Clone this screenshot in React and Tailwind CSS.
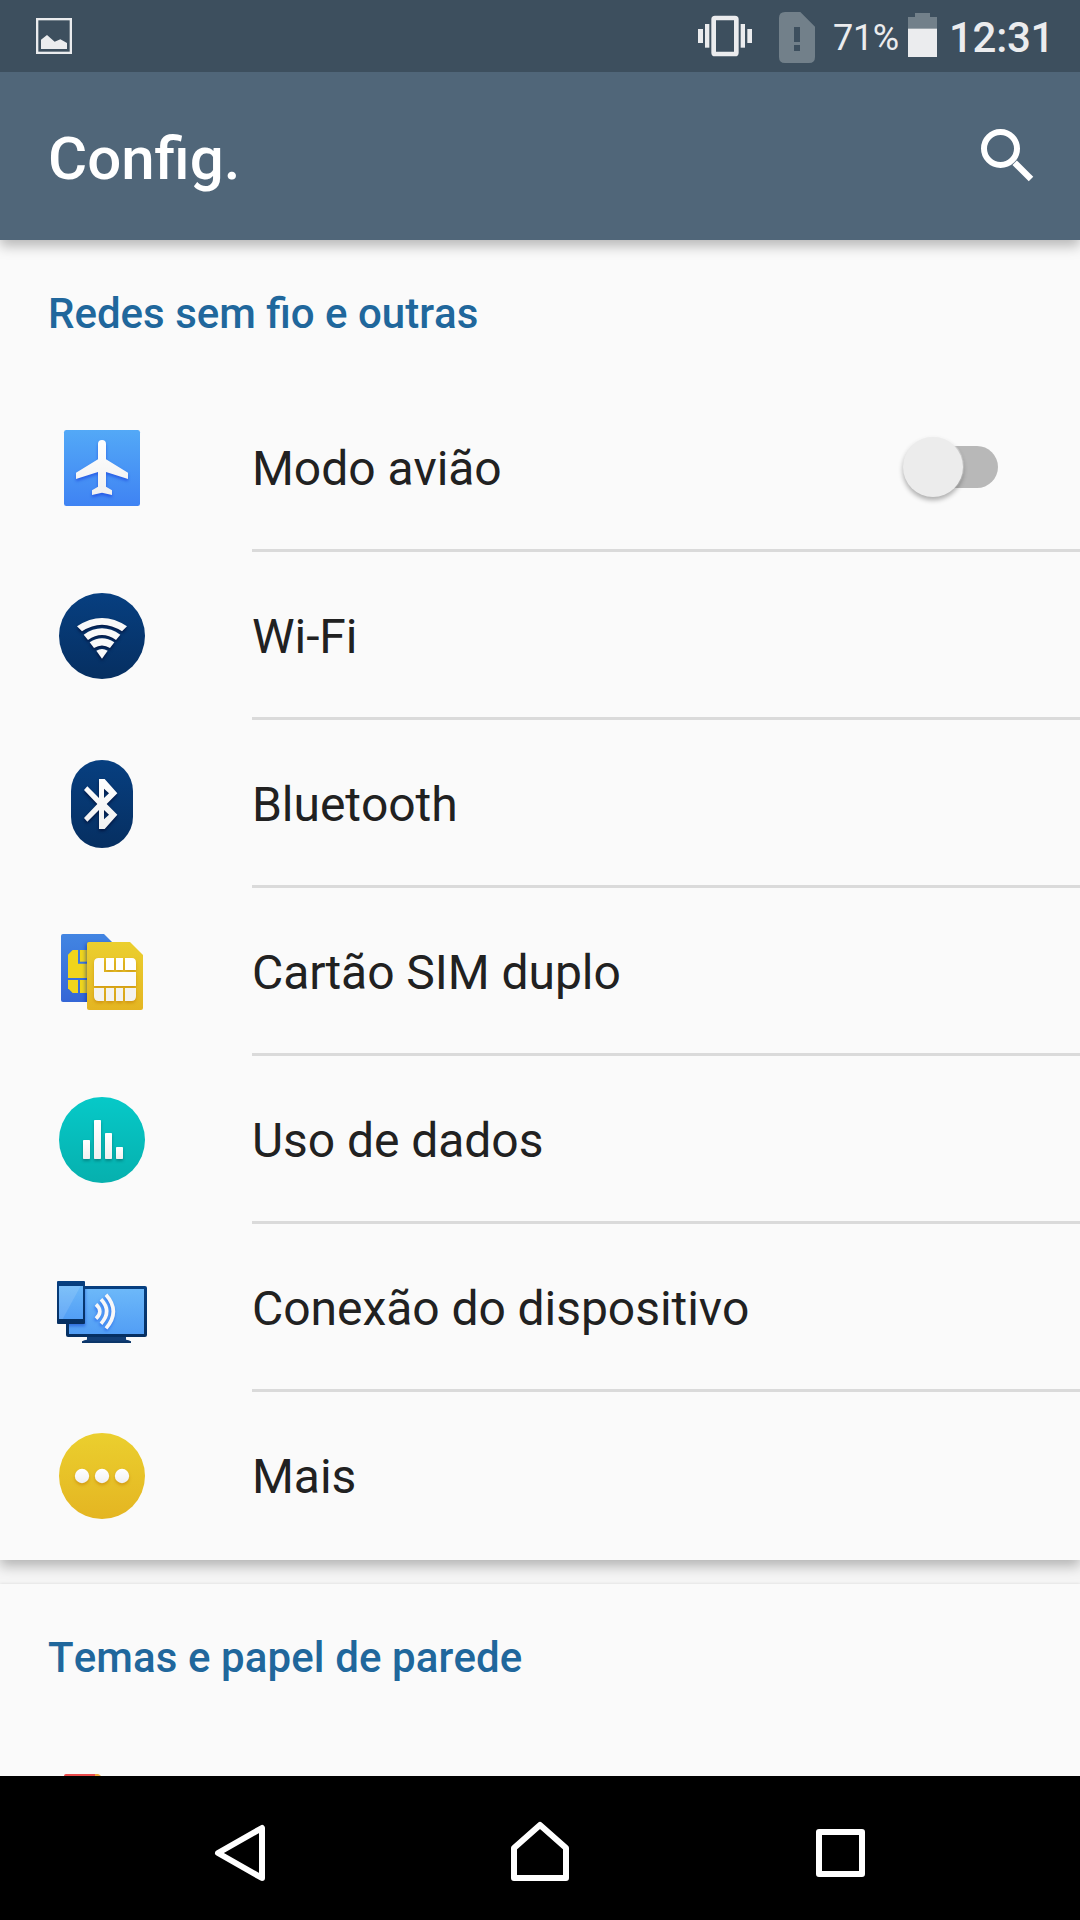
import React from "react";

function Gradients() {
  const list = [
    ["sky", "#53a9f7", "#3f83f3"],
    ["navy", "#073f80", "#062f61"],
    ["gold", "#ebcf2e", "#e4b522"],
    ["blue", "#4285e2", "#3466d6"],
    ["teal", "#06c9c8", "#06b0ae"],
    ["screen", "#6cb8f9", "#529ef5"],
    ["white", "#ffffff", "#f0f0f0"],
  ];
  return (
    <svg className="absolute h-0 w-0">
      <defs>
        {list.map(([id, a, b]) => (
          <linearGradient key={id} id={id} x1="0" y1="0" x2="0" y2="1">
            <stop offset="0" stopColor={a} />
            <stop offset="1" stopColor={b} />
          </linearGradient>
        ))}
        <clipPath id="backCard">
          <path d="M63 582H192L216 606V786H63Z" />
        </clipPath>
        <clipPath id="tvScreen">
          <rect x="87" y="627" width="225" height="135" />
        </clipPath>
      </defs>
    </svg>
  );
}

function Glyph({ box, children }) {
  return (
    <svg className="h-24 w-24 shrink-0" viewBox={box}>
      {children}
    </svg>
  );
}

const Airplane = () => (
  <Glyph box="42 30 288 288">
    <rect x="72" y="60" width="228" height="228" rx="7" fill="url(#sky)" />
    <path
      className="drop-shadow-[0_7px_5px_rgba(20,60,220,0.6)]"
      fill="url(#white)"
      d="M174 102a12 12 0 0 1 24 0V148L264 188V207L198 186V230L216 241V255L186 248L156 255V241L174 230V186L108 207V188L174 148Z"
    />
  </Glyph>
);

const Wifi = () => (
  <Glyph box="42 534 288 288">
    <circle cx="186" cy="678" r="129" fill="url(#navy)" />
    <g className="drop-shadow-[0_6px_4px_rgba(0,10,50,0.7)]" fill="#f9f9f9">
      <path d="M111 649Q186 599 261 649L246 664Q186 624 126 664Z" />
      <path d="M131 674Q186 636 241 674L228 690Q186 660 144 690Z" />
      <path d="M149 697Q186 673 223 697L210 714Q186 699 162 714Z" />
      <path d="M169 722Q186 712 203 722L186 746Z" />
    </g>
  </Glyph>
);

const Bluetooth = () => (
  <Glyph box="42 48 288 288">
    <rect x="93" y="60" width="186" height="264" rx="93" fill="url(#navy)" />
    <path
      className="drop-shadow-[0_6px_4px_rgba(0,10,50,0.7)]"
      fill="url(#white)"
      fillRule="evenodd"
      d="M177 117H194L232 160L200 192L232 224L194 267H177V210L142 245L132 234L172 192L132 150L142 139L177 174ZM192 146V174L207 160ZM192 210V238L207 224Z"
    />
  </Glyph>
);

const SimCards = () => (
  <Glyph box="42 552 288 288">
    <path d="M69 582H192L231 621V786H69Q63 786 63 780V588Q63 582 69 582Z" fill="url(#blue)" />
    <g fill="#f0d51b">
      <path d="M98 630H114V671H150V714H84V644Z" />
      <rect x="120" y="630" width="30" height="35" />
      <path d="M84 720H114V759H98L84 745Z" />
      <rect x="120" y="720" width="30" height="39" />
    </g>
    <g clipPath="url(#backCard)">
      <rect className="blur-[6px]" x="138" y="612" width="168" height="204" fill="#0a2896" opacity="0.6" />
    </g>
    <path
      d="M147 606H270L309 645V804Q309 810 303 810H147Q141 810 141 804V612Q141 606 147 606Z"
      fill="url(#gold)"
    />
    <g className="drop-shadow-[0_6px_4px_rgba(190,120,0,0.5)]">
      <path d="M176 654H192V696H288V738H162V668Q162 654 176 654Z" fill="#fbfbfb" />
      <path d="M198 654H222V690H198ZM228 654H249V690H228ZM255 654H276Q288 654 288 668V690H255Z" fill="#fff" />
      <path d="M162 744H192V783H176Q162 783 162 769ZM198 744H222V783H198ZM228 744H249V783H228ZM255 744H288V769Q288 783 274 783H255Z" fill="#f4f3ef" />
    </g>
  </Glyph>
);

const DataUsage = () => (
  <Glyph box="42 36 288 288">
    <circle cx="186" cy="180" r="129" fill="url(#teal)" />
    <g className="drop-shadow-[0_6px_4px_rgba(0,90,90,0.5)]" fill="url(#white)">
      <rect x="129" y="180" width="21" height="57" rx="2" />
      <rect x="162" y="120" width="21" height="117" rx="2" />
      <rect x="195" y="159" width="21" height="78" rx="2" />
      <rect x="228" y="201" width="21" height="36" rx="2" />
    </g>
  </Glyph>
);

const Devices = () => (
  <Glyph box="42 540 288 288">
    <path d="M141 768H258V779L273 784V789H126V784L141 779Z" fill="#0a3568" />
    <path d="M141 771H258V779L273 784H126L141 779Z" fill="#123e75" />
    <rect x="78" y="618" width="243" height="153" rx="6" fill="url(#navy)" />
    <rect x="87" y="627" width="225" height="135" fill="url(#screen)" />
    <g clipPath="url(#tvScreen)">
      <rect className="blur-[5px]" x="54" y="609" width="82" height="130" fill="#1446c8" opacity="0.55" />
    </g>
    <rect x="51" y="603" width="84" height="129" rx="3" fill="url(#navy)" />
    <rect x="57" y="618" width="72" height="99" fill="url(#screen)" />
    <path d="M57 618H122L68 717H57Z" fill="#fff" opacity="0.12" />
    <g
      className="drop-shadow-[-2px_6px_4px_rgba(20,80,230,0.6)]"
      fill="none" stroke="#f8f8f8" strokeWidth="11"
    >
      <path d="M168 673Q191 694 168 716" />
      <path d="M183 658Q217 694 183 731" />
      <path d="M198 644Q242 694 198 745" />
    </g>
  </Glyph>
);

const More = () => (
  <Glyph box="42 54 288 288">
    <circle cx="186" cy="198" r="129" fill="url(#gold)" />
    <g className="drop-shadow-[0_6px_4px_rgba(190,120,0,0.5)]" fill="url(#white)">
      <circle cx="126" cy="198" r="21.5" />
      <circle cx="186" cy="198" r="21.5" />
      <circle cx="246" cy="198" r="21.5" />
    </g>
  </Glyph>
);

const items = [
  { label: "Modo avião", Icon: Airplane, toggle: true },
  { label: "Wi-Fi", Icon: Wifi },
  { label: "Bluetooth", Icon: Bluetooth },
  { label: "Cartão SIM duplo", Icon: SimCards },
  { label: "Uso de dados", Icon: DataUsage },
  { label: "Conexão do dispositivo", Icon: Devices },
  { label: "Mais", Icon: More },
];

function Toggle() {
  return (
    <div className="relative mr-[82px] h-[42px] w-[84px] rounded-full bg-[#b8b8b8]">
      <div className="absolute -left-[11px] -top-[9px] h-[60px] w-[60px] rounded-full bg-[#ececec] shadow-[0_3px_5px_rgba(0,0,0,0.32),0_0_1px_1px_rgba(255,255,255,0.5)]" />
    </div>
  );
}

function StatusBar() {
  return (
    <div className="flex h-[72px] items-start bg-[#3d4f5e] text-[#ebecee]">
      <svg className="ml-9 mt-[18px] h-9 w-9" viewBox="108 54 108 108">
        <rect x="111.500" y="57.500" width="101" height="101" fill="none" stroke="currentColor" strokeWidth="7" />
        <path d="M123 147V119L141 105L164 125L181 118L201 129V147Z" fill="currentColor" />
      </svg>
      <svg className="ml-[626px] mt-[15px] h-[42px] w-[54px]" viewBox="54 45 162 126" fill="currentColor">
        <rect x="54" y="87" width="15" height="42" />
        <rect x="75" y="72" width="13" height="71" />
        <rect x="182" y="72" width="13" height="71" />
        <rect x="202" y="87" width="14" height="42" />
        <rect x="101" y="54" width="68" height="108" rx="4" fill="none" stroke="currentColor" strokeWidth="14" />
      </svg>
      <svg className="ml-[27px] mt-3 h-[51px] w-9" viewBox="297 36 108 153">
        <path
          fill="#72808a"
          fillRule="evenodd"
          d="M315 36H361L405 80V171Q405 189 387 189H315Q297 189 297 171V54Q297 36 315 36ZM342 81V126H360V81ZM342 135V153H360V135Z"
        />
      </svg>
      <span className="ml-[18px] mt-[17px] w-[66px] whitespace-nowrap text-[36px] leading-[42px] tracking-[-0.3px]">71%</span>
      <svg className="ml-[9px] mt-[13px] h-11 w-[29px]" viewBox="684 39 87 132">
        <path d="M705 39H750V51H771V87H684V51H705Z" fill="#72808a" />
        <rect x="684" y="86" width="87" height="85" fill="currentColor" />
      </svg>
      <span className="ml-[12px] mt-[13px] whitespace-nowrap text-[42px] font-medium leading-[49px] tracking-[-0.3px]">12:31</span>
    </div>
  );
}

function SectionTitle({ children, className = "" }) {
  return (
    <h2 className={"flex h-36 items-center pl-12 text-[42px] font-medium leading-[49px] text-[#20679c] " + className}>
      <span className="relative top-[1px]">{children}</span>
    </h2>
  );
}

export default function App() {
  return (
    <div className="flex h-[1920px] w-[1080px] flex-col overflow-hidden bg-[#f5f5f5] font-['Roboto',sans-serif] [font-kerning:none]">
      <Gradients />
      <header className="relative z-10 h-60 shrink-0 bg-[#506679] shadow-[0_6px_12px_rgba(0,0,0,0.27)]">
        <StatusBar />
        <div className="flex h-[168px] items-center justify-between pl-12 pr-9 text-white">
          <h1 className="pt-[5px] text-[60px] font-medium leading-[70px]">Config.</h1>
          <svg className="h-[72px] w-[72px]" viewBox="876 360 216 216" fill="none" stroke="currentColor">
            <circle cx="961.500" cy="445.500" r="49.500" strokeWidth="18" />
            <path d="M1004 488L1053 537" strokeWidth="19" />
          </svg>
        </div>
      </header>

      <main className="h-[1536px] overflow-hidden">
        <section className="relative bg-[#fafafa] shadow-[0_6px_12px_rgba(0,0,0,0.27)]">
          <SectionTitle>Redes sem fio e outras</SectionTitle>
          <ul>
            {items.map(({ label, Icon, toggle }, i) => (
              <li key={label} className="flex h-[168px] items-center pl-[54px]">
                <Icon />
                <div
                  className={
                    "ml-[102px] flex h-full grow items-center justify-between text-[48px] leading-[56px] tracking-[-0.05px] text-[#212121] " +
                    (i < items.length - 1 ? "border-b-[3px] border-[#dadada]" : "pb-[3px]")
                  }
                >
                  <span className="relative top-[2px]">{label}</span>
                  {toggle && <Toggle />}
                </div>
              </li>
            ))}
          </ul>
        </section>
        <section className="relative mt-6 bg-[#fafafa] shadow-[0_0_3px_rgba(0,0,0,0.12)]">
          <SectionTitle className="tracking-[0.1px]">Temas e papel de parede</SectionTitle>
          <div className="flex h-[168px] items-start pl-16 pt-[46px]">
            <svg className="h-[76px] w-[76px]" viewBox="0 0 76 76">
              <path d="M2 0H31V76H0V2Q0 0 2 0Z" fill="#ea4b4b" />
              <path d="M31 0H34Q37 1 38 4V76H31Z" fill="#f0a73c" />
            </svg>
          </div>
        </section>
      </main>

      <nav className="relative z-10 h-36 shrink-0 bg-black">
        <svg className="h-36 w-full" viewBox="0 1776 1080 144" fill="none" stroke="#fff" strokeWidth="6" strokeLinejoin="round">
          <path d="M262 1828V1878L218 1853Z" />
          <path d="M540 1825L566 1848V1878H514V1848Z" />
          <rect x="819" y="1832" width="43" height="42" />
        </svg>
      </nav>
    </div>
  );
}
